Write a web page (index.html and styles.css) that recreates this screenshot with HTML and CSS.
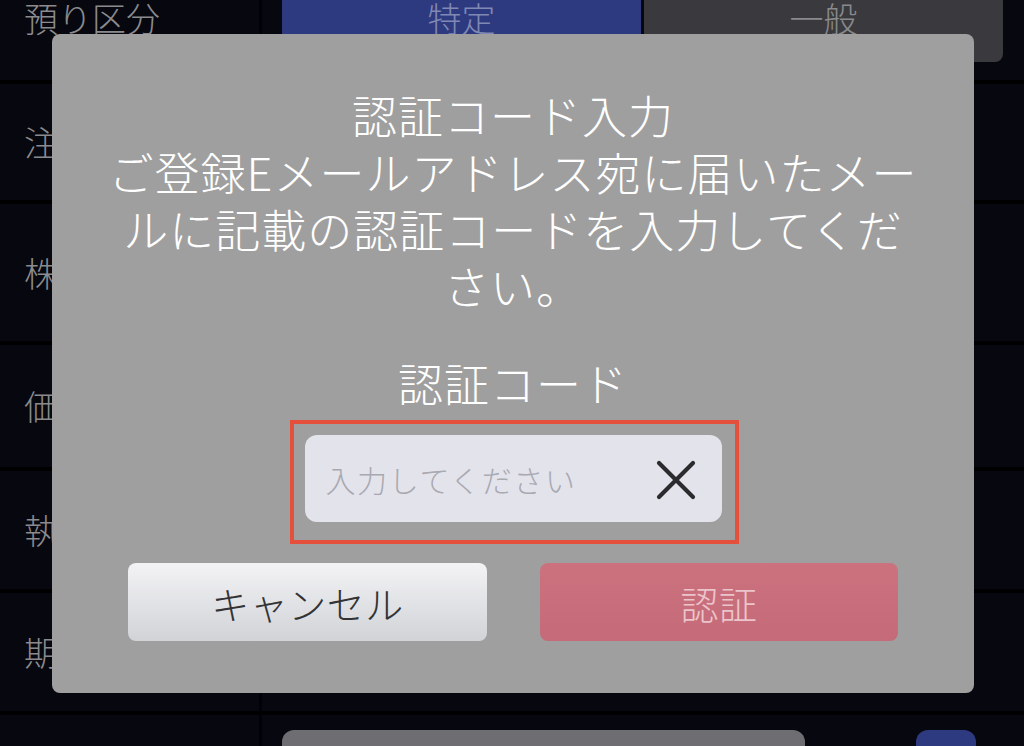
FILE: index.html
```html
<!DOCTYPE html>
<html lang="ja">
<head>
<meta charset="utf-8">
<title>認証コード入力</title>
<link rel="stylesheet" href="styles.css">
</head>
<body>
<div class="screen">
  <div class="row row-top">
    <div class="label">預り区分</div>
    <div class="cell">
      <div class="seg seg-on">特定</div>
      <div class="seg seg-off">一般</div>
    </div>
  </div>
  <div class="row row-a"><div class="label">注</div><div class="cell"></div></div>
  <div class="row row-b"><div class="label">株</div><div class="cell"></div></div>
  <div class="row row-c"><div class="label">価</div><div class="cell"></div></div>
  <div class="row row-d"><div class="label">執</div><div class="cell"></div></div>
  <div class="row row-e"><div class="label">期</div><div class="cell"></div></div>
  <div class="row row-last">
    <div class="label"></div>
    <div class="cell cell-last">
      <div class="field-bg"></div>
      <div class="mini-btn"></div>
    </div>
  </div>

  <div class="dialog">
    <div class="msg">認証コード入力<br>ご登録Eメールアドレス宛に届いたメー<br>ルに記載の認証コードを入力してくだ<br>さい。</div>
    <div class="code-label">認証コード</div>
    <div class="highlight">
      <div class="input">
        <span class="placeholder">入力してください</span>
        <svg class="clear" width="42" height="42" viewBox="0 0 42 42"><path d="M4 4 L38 38 M38 4 L4 38" stroke="#2b2b2d" stroke-width="4.2" stroke-linecap="round" fill="none"/></svg>
      </div>
    </div>
    <div class="actions">
      <div class="btn btn-cancel">キャンセル</div>
      <div class="btn btn-ok">認証</div>
    </div>
  </div>
</div>
</body>
</html>
```
FILE: styles.css
```css
* { box-sizing: border-box; }
html, body { margin: 0; padding: 0; }
body {
  width: 1024px;
  height: 746px;
  overflow: hidden;
  background: #000;
  font-family: "Noto Sans CJK JP", "Noto Sans", sans-serif;
  font-weight: 300;
}
.screen {
  position: relative;
  width: 1024px;
  height: 746px;
  display: flex;
  flex-direction: column;
  gap: 4px;
  background: #000;
}
.row {
  display: grid;
  grid-template-columns: 259px 1fr;
  background: #07070f;
  flex: none;
}
.row-top { height: 80px; }
.row-a { height: 116px; }
.row-b { height: 137px; }
.row-c { height: 122px; }
.row-d { height: 118px; }
.row-e { height: 118px; }
.row-last { flex: 1; }
.label {
  color: #8b8b8e;
  font-size: 34px;
  line-height: 40px;
  padding-left: 24px;
  white-space: nowrap;
  overflow: hidden;
  display: flex;
  align-items: center;
}
.row-top .label { align-items: flex-start; margin-top: -2px; }
.cell {
  border-left: 3px solid #020206;
  display: flex;
  padding-left: 20px;
}
.row-top .cell { gap: 3px; padding-right: 21px; }
.seg {
  flex: 1;
  height: 62px;
  border-radius: 0 0 8px 8px;
  display: flex;
  justify-content: center;
  align-items: flex-start;
  font-size: 34px;
  line-height: 36px;
}
.seg-on { background: #2e3a7f; color: #8088b4; }
.seg-off { background: #3a3a3e; color: #8a8a8c; }
.cell-last {
  padding-top: 15px;
  gap: 111px;
}
.field-bg {
  width: 523px;
  height: 40px;
  background: #6e6e72;
  border-radius: 12px 12px 0 0;
}
.mini-btn {
  width: 60px;
  height: 40px;
  background: #2e3a7f;
  border-radius: 12px 12px 0 0;
}

.dialog {
  position: absolute;
  left: 52px;
  top: 34px;
  width: 922px;
  height: 659px;
  background: #9f9f9f;
  border-radius: 8px;
  display: flex;
  flex-direction: column;
  align-items: center;
  padding-top: 52px;
  color: #fff;
}
.msg {
  font-size: 45px;
  line-height: 57px;
  letter-spacing: 1px;
  text-align: center;
  white-space: nowrap;
}
.code-label {
  margin-top: 40px;
  font-size: 45px;
  line-height: 57px;
  letter-spacing: 1px;
}
.highlight {
  margin-top: 9px;
  width: 449px;
  height: 124px;
  border: 4px solid #e5503c;
  padding: 11px 13px 18px 11px;
  margin-left: 2px;
}
.input {
  height: 87px;
  background: #e3e3ec;
  border-radius: 12px;
  display: flex;
  align-items: center;
  justify-content: space-between;
  padding: 0 25px 0 21px;
}
.placeholder {
  color: #a9a9b1;
  font-size: 30px;
  letter-spacing: 1.6px;
}
.clear { display: block; margin-top: 2px; }
.actions {
  margin-top: 19px;
  width: 770px;
  display: flex;
  justify-content: space-between;
}
.btn {
  width: 359px;
  height: 78px;
  border-radius: 8px;
  display: flex;
  justify-content: center;
  align-items: center;
  font-size: 38px;
  letter-spacing: 0.5px;
}
.btn-cancel {
  background: linear-gradient(#f3f3f5, #d1d3d7);
  color: #333335;
}
.btn-ok {
  width: 358px;
  background: linear-gradient(#cc727f, #c46a78);
  color: #ecc4cb;
}
```
